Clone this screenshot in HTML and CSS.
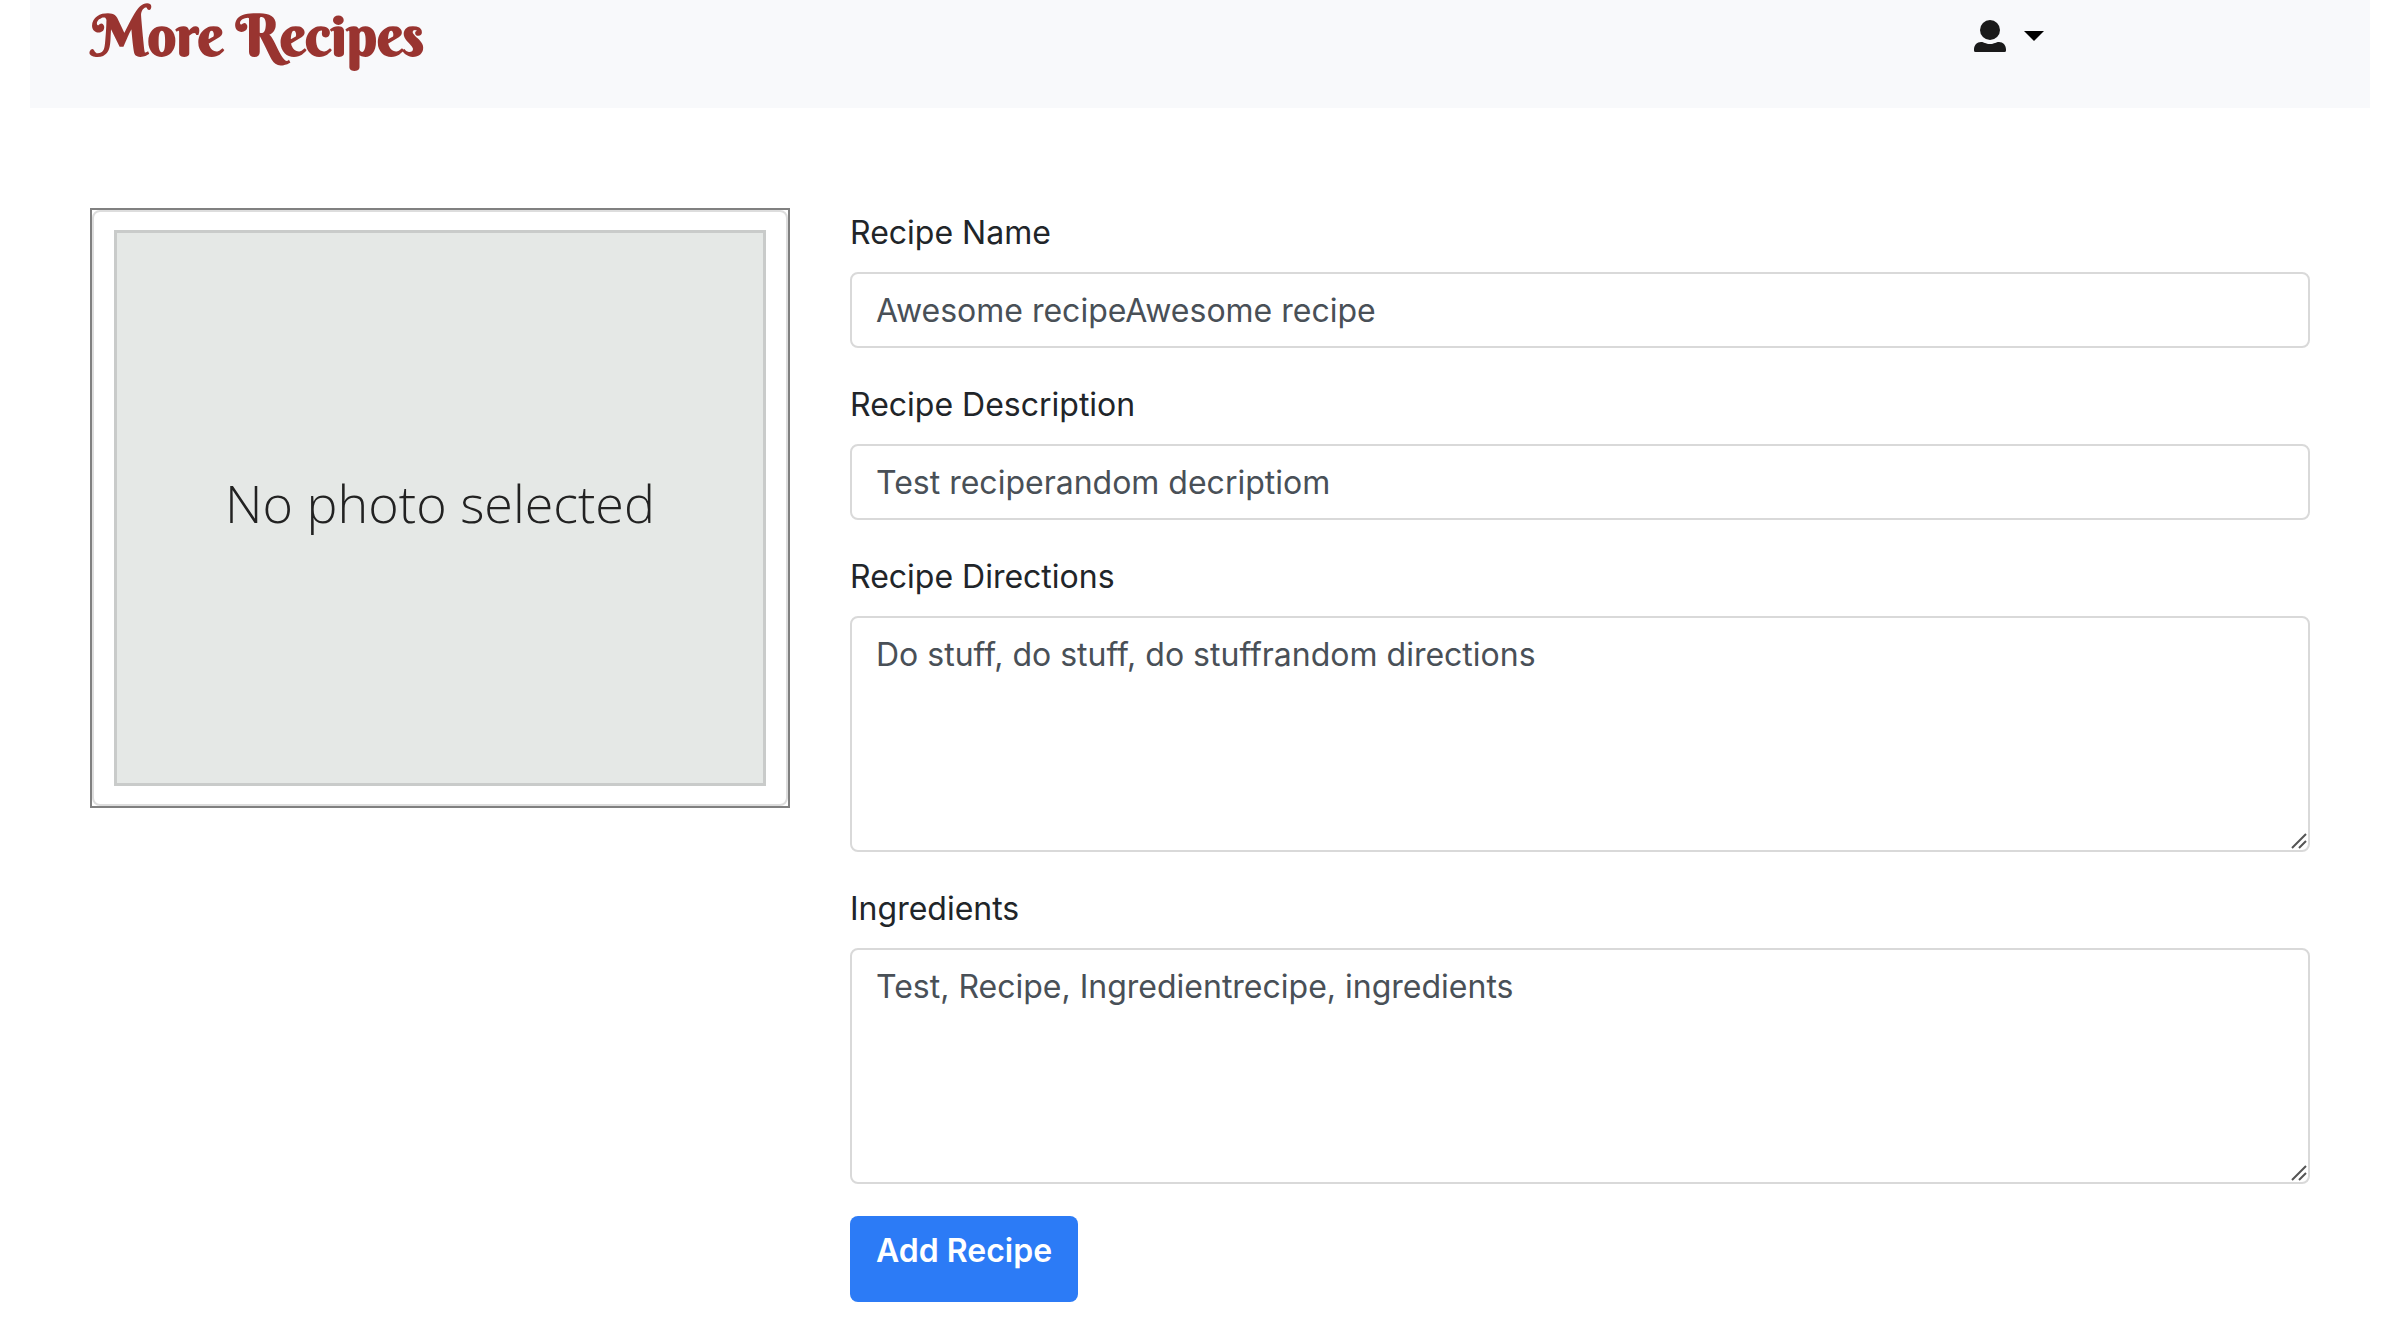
FILE: index.html
```html
<!DOCTYPE html>
<html lang="en">
<head>
<meta charset="utf-8">
<title>More Recipes</title>
<link rel="stylesheet" href="styles.css">
</head>
<body>
<header class="navbar">
  <a class="brand" href="#">More Recipes</a>
  <nav class="account">
    <button class="account-toggle" type="button" aria-label="Account menu" aria-haspopup="true">
      <svg class="user-icon" viewBox="0 0 32 32" aria-hidden="true">
        <circle cx="16" cy="10" r="10"/>
        <path d="M0 30.500V29.500C0 25 3 22 7 22C10 22 11.500 24 16 24C20.500 24 22 22 25 22C29 22 32 25 32 29.500V30.500Q32 32 30.500 32H1.500Q0 32 0 30.500Z"/>
      </svg>
      <svg class="caret" viewBox="0 0 20 10" aria-hidden="true"><path d="M0 0H20L10 10Z"/></svg>
    </button>
  </nav>
</header>
<main class="content">
  <div class="photo-frame">
    <div class="thumbnail">
      <div class="placeholder">No photo selected</div>
    </div>
  </div>
  <form class="recipe-form">
    <div class="field">
      <label for="name">Recipe Name</label>
      <input class="control" id="name" type="text" value="Awesome recipeAwesome recipe">
    </div>
    <div class="field">
      <label for="description">Recipe Description</label>
      <input class="control" id="description" type="text" value="Test reciperandom decriptiom">
    </div>
    <div class="field">
      <label for="directions">Recipe Directions</label>
      <textarea class="control area" id="directions">Do stuff, do stuff, do stuffrandom directions</textarea>
    </div>
    <div class="field">
      <label for="ingredients">Ingredients</label>
      <textarea class="control area" id="ingredients">Test, Recipe, Ingredientrecipe, ingredients</textarea>
    </div>
    <button class="submit" type="submit">Add Recipe</button>
  </form>
</main>
</body>
</html>
```
FILE: styles.css
```css
* {
  box-sizing: border-box;
}

body {
  margin: 0;
  padding: 0 30px;
  background: #fff;
  color: #212529;
  font-family: Inter, "Liberation Sans", sans-serif;
  font-size: 32px;
  line-height: 48px;
}

.navbar {
  display: grid;
  grid-template-columns: 5fr 1fr;
  align-items: start;
  min-height: 108px;
  padding: 0 30px;
  background: #f8f9fb;
}

.brand {
  padding-left: 32px;
  color: #993430;
  font-family: "Berkshire Swash", "Liberation Serif", serif;
  font-size: 56px;
  font-weight: 700;
  line-height: 72px;
  text-decoration: none;
}

.account-toggle {
  display: flex;
  align-items: center;
  gap: 18px;
  padding: 20px 14px;
  border: 0;
  background: none;
}

.user-icon {
  width: 32px;
  height: 32px;
  fill: #1a1a1a;
}

.caret {
  width: 20px;
  height: 10px;
  fill: #000;
}

.content {
  display: grid;
  grid-template-columns: 1fr 2fr;
  align-items: start;
  margin: 0 30px;
  padding: 100px 0 32px;
}

.photo-frame {
  aspect-ratio: 7 / 6;
  margin: 0 30px;
  border: 2px solid #808080;
}

.thumbnail {
  height: 100%;
  padding: 18px 20px;
  border: 2px solid #ddd;
  border-radius: 8px;
}

.placeholder {
  display: flex;
  align-items: center;
  justify-content: center;
  height: 100%;
  padding-bottom: 10px;
  border: 3px solid #c9cbca;
  background: #e5e8e6;
  color: #222;
  font-family: "Open Sans", "Noto Sans", sans-serif;
  font-size: 52px;
  font-weight: 300;
  white-space: nowrap;
}

.recipe-form {
  padding: 0 30px;
}

.field {
  display: flex;
  flex-direction: column;
  gap: 15px;
  margin-bottom: 32px;
}

.field label {
  padding-top: 1px;
}

.control {
  width: 100%;
  height: 76px;
  padding: 12px 24px;
  border: 2px solid #d9d9d9;
  border-radius: 8px;
  background: #fff;
  color: #495057;
  font: inherit;
}

.area {
  height: 236px;
  padding-top: 13px;
  background: #fff url("data:image/svg+xml,%3Csvg xmlns='http://www.w3.org/2000/svg' width='16' height='16'%3E%3Cpath d='M1 15L15 1M8 15L15 8' stroke='%23555' stroke-width='2'/%3E%3C/svg%3E") no-repeat right 1px bottom 1px;
  resize: vertical;
}

.area::-webkit-resizer {
  background: transparent;
}

.submit {
  padding: 11px 26px 27px;
  border: 0;
  border-radius: 8px;
  background: #2c7bf6;
  color: #fff;
  font: inherit;
  font-weight: 600;
}
```
